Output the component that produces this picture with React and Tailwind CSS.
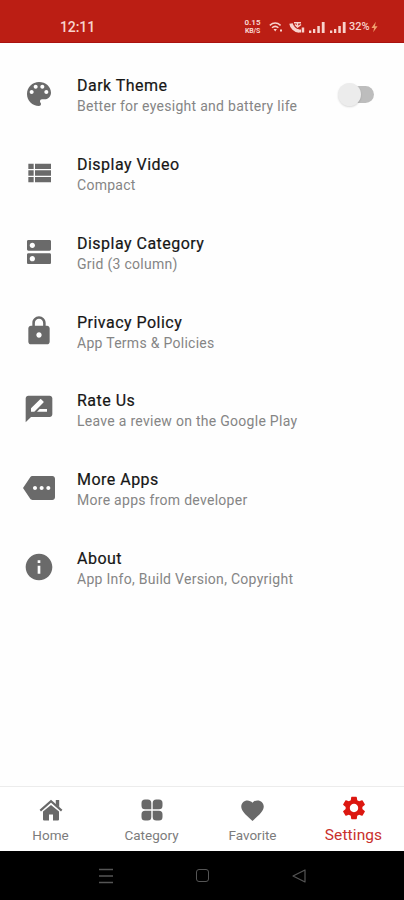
import { MdDns, MdLock, MdMore, MdInfo, MdFavorite, MdSettings } from "react-icons/md";

function PaletteIcon({ className }) {
  return (
    <svg viewBox="0 0 24 24" fill="currentColor" className={className}>
      <path d="M12 3c-4.970 0-9 4.030-9 9s4.030 9 9 9c.83 0 1.500-.67 1.500-1.500 0-.39-.15-.74-.39-1.010-.23-.26-.38-.61-.38-.99 0-.83.67-1.500 1.500-1.500H16c2.760 0 5-2.240 5-5 0-4.420-4.030-8-9-8zm-5.500 9c-.83 0-1.500-.67-1.500-1.500S5.670 9 6.500 9 8 9.670 8 10.500 7.330 12 6.500 12zm3-4C8.670 8 8 7.330 8 6.500S8.670 5 9.500 5s1.500.67 1.500 1.500S10.330 8 9.500 8zm5 0c-.83 0-1.500-.67-1.500-1.500S13.670 5 14.500 5s1.500.67 1.500 1.500S15.330 8 14.500 8zm3 4c-.83 0-1.500-.67-1.500-1.500S16.670 9 17.500 9s1.500.67 1.500 1.500-.67 1.500-1.500 1.500z" />
    </svg>
  );
}

function ListIcon({ className }) {
  return (
    <svg viewBox="0 0 24 24" fill="currentColor" className={className}>
      <path d="M4 14h4v-4H4v4zm0 5h4v-4H4v4zM4 9h4V5H4v4zm5 5h12v-4H9v4zm0 5h12v-4H9v4zM9 5v4h12V5H9z" />
    </svg>
  );
}

function ReviewIcon({ className }) {
  return (
    <svg viewBox="0 0 24 24" fill="currentColor" className={className}>
      <path d="M20 2H4c-1.100 0-1.990.9-1.990 2L2 22l4-4h14c1.100 0 2-.9 2-2V4c0-1.100-.9-2-2-2zM6 14v-2.470l6.880-6.880c.2-.2.51-.2.71 0l1.770 1.770c.2.2.2.51 0 .71L8.470 14H6zm12 0h-7.500l2-2H18v2z" />
    </svg>
  );
}

function HomeIcon() {
  return (
    <svg viewBox="0 0 24 24" className="h-6 w-6" fill="currentColor">
      <path d="M12 6.900 20 13.500V21.500a1.100 1.100 0 0 1-1.100 1.100H14V16.500H10v6.100H5.100A1.100 1.100 0 0 1 4 21.500V13.500z" />
      <path d="M1.300 12.600 12 3.200l10.700 9.400" fill="none" stroke="currentColor" strokeWidth="2.100" />
      <path d="M16.800 2h3.400v7.400l-3.400-3z" />
    </svg>
  );
}

function CategoryIcon() {
  return (
    <svg viewBox="0 0 24 24" className="h-6 w-6" fill="currentColor">
      <path d="M5 1.500h2.800a3.500 3.500 0 0 1 3.500 3.500v6.200H5A3.500 3.500 0 0 1 1.500 7.700V5A3.500 3.500 0 0 1 5 1.500z" />
      <path d="M19 1.500h-2.800a3.500 3.500 0 0 0-3.500 3.500v6.200H19a3.500 3.500 0 0 0 3.500-3.500V5A3.500 3.500 0 0 0 19 1.500z" />
      <path d="M5 22.500h2.800a3.500 3.500 0 0 0 3.500-3.500v-6.200H5a3.500 3.500 0 0 0-3.500 3.500V19A3.500 3.500 0 0 0 5 22.500z" />
      <path d="M19 22.500h-2.800a3.500 3.500 0 0 1-3.500-3.500v-6.200H19a3.500 3.500 0 0 1 3.500 3.500V19a3.500 3.500 0 0 1-3.500 3.500z" />
    </svg>
  );
}

function Signal() {
  return (
    <svg viewBox="0 0 16 13" className="h-[13px] w-4" fill="currentColor">
      <path d="M0 9.500h2.300V12H0zM4 8h2.300v4H4zM8.300 5h2.500v7H8.300zM12.800 1h2.800v11h-2.800z" />
    </svg>
  );
}

const items = [
  [PaletteIcon, "Dark Theme", "Better for eyesight and battery life"],
  [ListIcon, "Display Video", "Compact"],
  [MdDns, "Display Category", "Grid (3 column)"],
  [MdLock, "Privacy Policy", "App Terms & Policies"],
  [ReviewIcon, "Rate Us", "Leave a review on the Google Play"],
  [MdMore, "More Apps", "More apps from developer"],
  [MdInfo, "About", "App Info, Build Version, Copyright"],
];

function Toggle() {
  return (
    <div className="relative mr-[30px] h-[17px] w-[32px] rounded-full bg-[#bdbdbd]">
      <div className="absolute -top-[3px] -left-[4px] h-[23px] w-[23px] rounded-full bg-[#ececec] shadow-[0_1px_2px_rgba(0,0,0,0.15)]" />
    </div>
  );
}

export default function App() {
  return (
    <div className="flex h-[900px] w-[404px] flex-col overflow-hidden bg-[#fefefe] font-['Roboto',sans-serif]">
      <header className="flex h-[43px] shrink-0 items-center border-b border-[#a91210] bg-[#bb1e14] pt-[12px] pl-[60px] text-[#f8d3cd]">
        <span className="w-[184px] text-[14px] font-medium tracking-[-0.1px]">12:11</span>
        <div className="flex w-[17px] flex-col items-center font-bold">
          <span className="text-[8px] leading-[8px]">0.15</span>
          <span className="text-[7px] leading-[8px] tracking-[-0.2px]">KB/S</span>
        </div>
        <svg viewBox="0 0 14 12" className="ml-[8px] h-3 w-[14px]" fill="none" stroke="currentColor" strokeWidth="1.500">
          <path d="M.8 4.300q5.400-4.500 10.800 0M3 6.700q3.200-2.700 6.400 0" />
          <path d="M4.500 8h3.400L6.200 10.500zM11 8.500h2v2h-2z" fill="currentColor" stroke="none" />
        </svg>
        <svg viewBox="0 0 16 13" className="ml-[6px] h-[13px] w-4" fill="none" stroke="currentColor">
          <path d="M2 2.500C2.500 6 6 10 10 10" strokeWidth="3.500" />
          <path d="M5 1.800h7M8.500 2v3.500M6 3.500l2.500 2.500L12 3.500" strokeWidth="1.400" />
          <path d="M10 8.500h2v3h-2zM12.700 6.500H15.200v5h-2.500z" fill="currentColor" stroke="none" />
        </svg>
        <span className="ml-[4px]"><Signal /></span>
        <span className="ml-[5px]"><Signal /></span>
        <span className="ml-[3px] text-[11px] font-medium">32%</span>
        <svg viewBox="0 0 8 12" className="ml-[1px] h-3 w-[7px] text-[#f0a06d]" fill="currentColor">
          <path d="M5.500 0 .5 7h3L2.500 12 7.500 5h-3z" />
        </svg>
      </header>

      <main className="flex flex-1 flex-col pt-[12px]">
        {items.map(([Icon, title, sub], i) => (
          <div key={title} className="flex h-[78.75px] shrink-0 items-center pl-[22.5px]">
            <Icon className="h-8 w-8 shrink-0 text-[#6a6a6a]" />
            <div className="ml-[22.5px] flex flex-1 flex-col pt-[4px]">
              <span className="text-[16px] leading-[21px] tracking-[0.48px] text-[#161616] [-webkit-text-stroke:0.2px_#161616]">{title}</span>
              <span className="text-[14px] leading-[21px] tracking-[0.28px] whitespace-nowrap text-[#858585]">{sub}</span>
            </div>
            {i === 0 && <Toggle />}
          </div>
        ))}
      </main>

      <nav className="grid h-[65px] shrink-0 grid-cols-4 border-t border-[#ececec] bg-white text-[#696969]">
        <div className="flex flex-col items-center pt-[11px]">
          <HomeIcon />
          <span className="text-[13.5px] leading-[26px] text-[#7c7c7c]">Home</span>
        </div>
        <div className="flex flex-col items-center pt-[11px]">
          <CategoryIcon />
          <span className="text-[13.5px] leading-[26px] text-[#7c7c7c]">Category</span>
        </div>
        <div className="flex flex-col items-center pt-[10px]">
          <MdFavorite className="h-[27px] w-[27px]" />
          <span className="text-[13.5px] leading-[22px] text-[#7c7c7c]">Favorite</span>
        </div>
        <div className="flex flex-col items-center pt-[7px] text-[#dc1710]">
          <MdSettings className="h-[28px] w-[28px]" />
          <span className="text-[15.5px] leading-[26px] tracking-[0.1px] text-[#c9302c]">Settings</span>
        </div>
      </nav>

      <footer className="flex h-[49px] shrink-0 items-center bg-black pl-[98px] text-[#555]">
        <svg viewBox="0 0 16 16" className="h-4 w-4" stroke="currentColor" strokeWidth="1.300">
          <path d="M1 1.500h14M1 8h14M1 14.500h14" />
        </svg>
        <div className="ml-[82px] h-[13px] w-[13px] rounded-[3px] border border-current" />
        <svg viewBox="0 0 14 14" className="ml-[83px] h-[14px] w-[14px]" fill="none" stroke="currentColor" strokeWidth="1.200" strokeLinejoin="round">
          <path d="M13 1v12L1 7z" />
        </svg>
      </footer>
    </div>
  );
}
